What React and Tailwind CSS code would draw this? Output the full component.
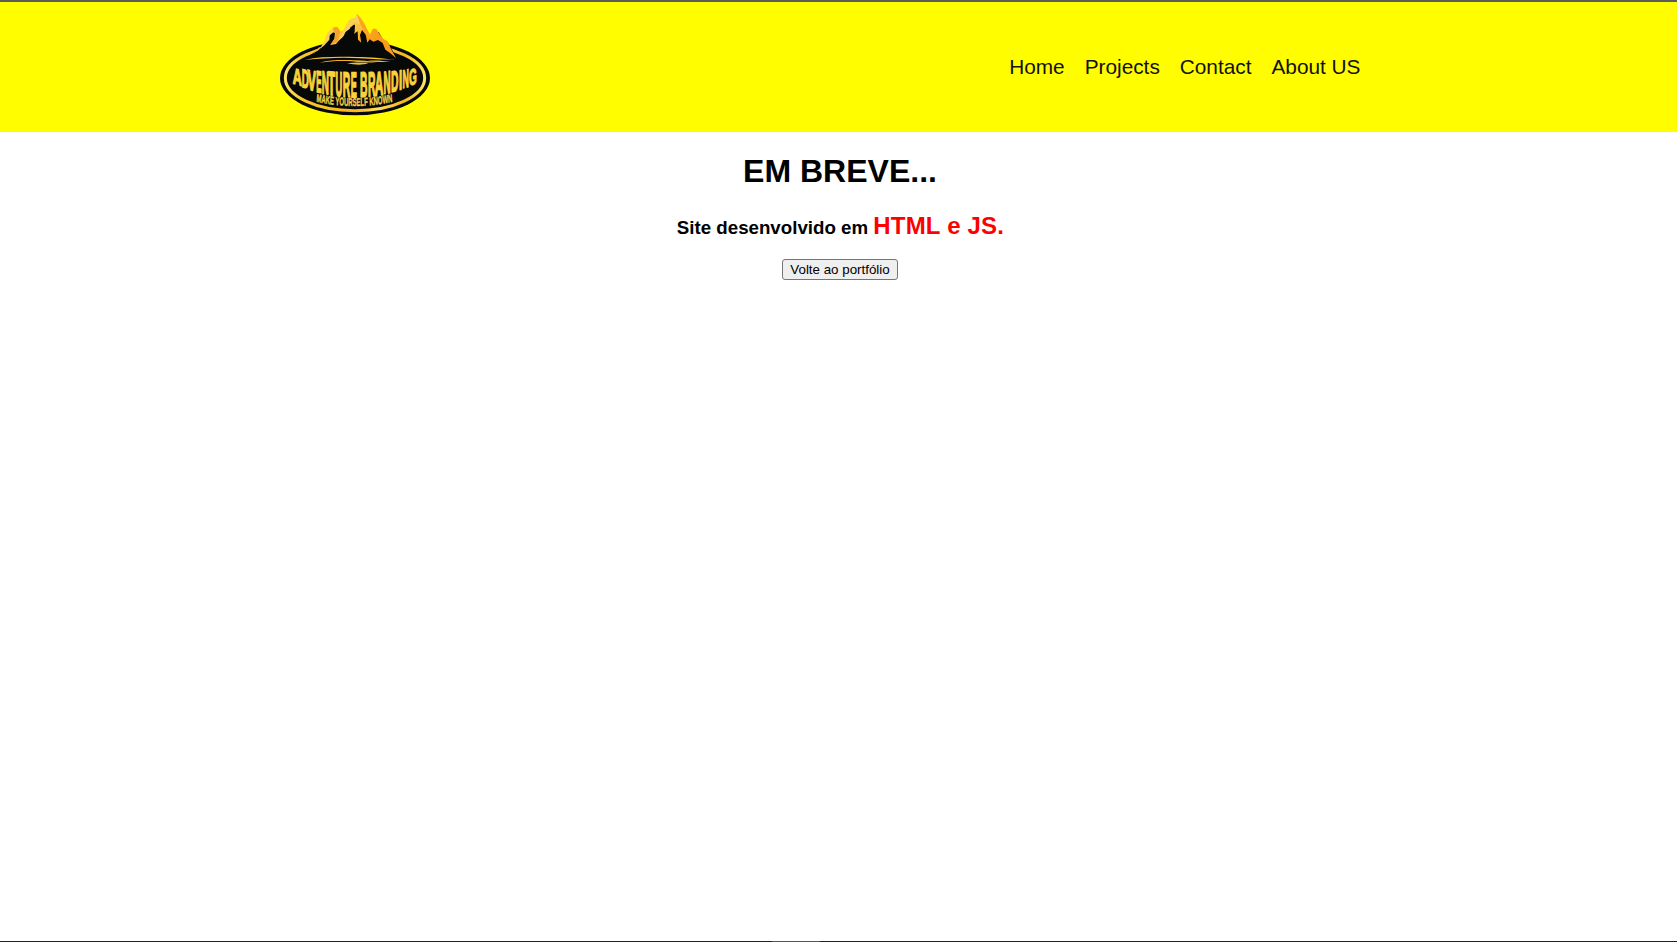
// [character, left, right, advance width in em]
const TITLE = [
  ['A', 69, 95, 0.722], ['D', 96, 116, 0.722], ['V', 113, 137, 0.667], ['E', 139, 154, 0.667],
  ['N', 156, 176, 0.722], ['T', 175, 195, 0.611], ['U', 197, 216, 0.722], ['R', 219, 240, 0.722],
  ['E', 243, 260, 0.667], ['B', 271, 292, 0.722], ['R', 295, 316, 0.722], ['A', 315, 339, 0.722],
  ['N', 341, 361, 0.722], ['D', 364, 385, 0.722], ['I', 387, 396, 0.278], ['N', 398, 416, 0.722],
  ['G', 418, 440, 0.778],
];

const topAt = (x) => 218 - 12 * ((x - 255) / 185) ** 2;
const bottomAt = (x) => 291 - 42 * ((x - 255) / 185) ** 2;

function TitleLetter({ item }) {
  const [char, left, right, advance] = item;
  const middle = (left + right) / 2;
  const scaleY = (bottomAt(middle) - topAt(middle)) / 69;
  const scaleX = (right - left) / (advance * 94);
  const slope = (-2 * 28 * (middle - 255)) / 185 ** 2;
  const matrix = `matrix(${scaleX} ${slope * scaleX} 0 ${scaleY} ${middle} ${bottomAt(middle)})`;
  return (
    <text transform={matrix} textAnchor="middle" fontSize="100">
      {char}
    </text>
  );
}

function Logo() {
  return (
    <svg className="block h-[140px] w-[170px]" viewBox="0 0 510 420" role="img" aria-label="Adventure Branding">
      <defs>
        <linearGradient id="ring" x1="0" x2="1" y1="0" y2="0">
          <stop offset="0" stopColor="#fbe36a" />
          <stop offset=".12" stopColor="#f8c82b" />
          <stop offset=".5" stopColor="#fbb51c" />
          <stop offset=".65" stopColor="#fbdf5c" />
          <stop offset=".85" stopColor="#f4b51e" />
          <stop offset="1" stopColor="#fbe464" />
        </linearGradient>
        <linearGradient id="peak" x1="0" x2="1" y1="0" y2=".7">
          <stop offset="0" stopColor="#f9cf50" />
          <stop offset=".5" stopColor="#fbc33c" />
          <stop offset=".65" stopColor="#fba01d" />
          <stop offset="1" stopColor="#f9981c" />
        </linearGradient>
        <path id="taglineArc" d="M224 305Q411 331 597 305" />
      </defs>
      <ellipse cx="255" cy="234" rx="225" ry="112" fill="#070808" />
      <ellipse cx="255" cy="234" rx="209" ry="98" fill="none" stroke="url(#ring)" strokeWidth="9" />
      <path d="M104 180 122 164 150 144 166 124 178 98 192 88 212 97 223 94 238 68 258 60 270 62 288 92 300 108 312 94 326 96 340 120 354 128 384 180Z" fill="#070808" />
      <path d="M150 145 164 123 172 100 190 82 202 81 211 94 221 91 235 64 244 56 257 53 260 41 272 55 282 69 290 86 300 104 309 86 319 87 329 103 340 117 353 124 362 145 378 174 359 158 346 149 338 129 324 120 310 125 299 118 292 128 287 104 276 90 270 105 274 128 264 119 263 94 252 101 246 90 242 77 229 90 221 108 209 119 198 132 181 135 193 116 195 99 185 95 177 108 177 118 160 136Z" fill="url(#peak)" />
      <path d="m192 82 10-1 9 13-8 31-22 10 13-19 3-18-11-9Z" fill="#f8a12a" />
      <path d="M190 84 172 101 164 124 150 146 163 136 178 119 179 106 190 97Z" fill="#fad057" />
      <path d="m257 53 3-12 12 14 10 14 7 20-13-6-9-12-14-4-12 8-16 12-3 7 15-30 9-8Z" fill="#f9d255" />
      <path d="M221 91 235 64 246 72 240 86 226 96 216 113 206 121Z" fill="#f9d255" />
      <path d="M260 41 272 55 282 69 290 86 300 104 309 86 319 87 308 108 296 114 282 92 272 76Z" fill="#fba21e" />
      <path d="m262 73 10 5-3 9-7 3Z" fill="#f8c040" />
      <path d="m244 80 6-5 5-1-1 22-4 8-6-10-8 12-4 18-6-4 10-28Z" fill="#070808" />
      <path d="m134 154 14-12 7-1-10 10-19 11Z" fill="#f9b925" />
      <path d="M104 180c46-11 100-10 157-9 43 0 70 4 118 9-42 0-75-3-112-5-55-4-103 0-163 5Z" fill="#fbc52d" />
      <path d="M149 188c33-10 79-8 111-7 26 1 49 6 73 1-26 9-48 5-76 3-41-3-69-2-108 3Z" fill="#f8b320" />
      <path d="M231 190c22-3 44-3 64 0-22 7-43 4-64 0ZM294 182c24-2 46 0 68 4-25 1-43 0-68-4Z" fill="#e3c431" />
      <g fontFamily="Liberation Sans, Arial, sans-serif" fontWeight="700" fill="#f9d23c" stroke="#f9d23c" strokeWidth="5.5">
        {TITLE.map((item) => (
          <TitleLetter key={item[1]} item={item} />
        ))}
      </g>
      <text fontFamily="Liberation Sans, Arial, sans-serif" fontWeight="700" fontSize="34" fill="#f8d046" transform="matrix(.62 0 0 1 0 0)" stroke="#f8d046" strokeWidth="1.2">
        <textPath href="#taglineArc" textLength="370" lengthAdjust="spacingAndGlyphs">MAKE YOURSELF KNOWN</textPath>
      </text>
    </svg>
  );
}

const LINKS = ['Home', 'Projects', 'Contact', 'About US'];

export default function App() {
  return (
    <div className="flex h-[942px] w-full flex-col overflow-hidden bg-white font-['Liberation_Sans',Arial,sans-serif] text-black">
      <header className="flex h-[132px] shrink-0 items-start justify-between border-t-2 border-[#5b5b5b] bg-[#fffd00] pl-[270px] pr-[316.5px]">
        <div className="-mt-0.5">
          <Logo />
        </div>
        <nav className="mt-[53px]">
          <ul className="flex gap-5 text-[20.8px] leading-6 text-[#111]">
            {LINKS.map((label) => (
              <li key={label}>
                <a href="#">{label}</a>
              </li>
            ))}
          </ul>
        </nav>
      </header>
      <main className="flex flex-1 flex-col items-center pl-[3px] pt-[21px]">
        <h1 className="text-[32px] font-bold leading-[37px]">EM BREVE...</h1>
        <h3 className="mt-[22px] pl-px text-[18.72px] font-bold leading-[27px]">
          Site desenvolvido em <span className="text-[24px] tracking-[0.2px] text-[#ff0000]">HTML e JS.</span>
        </h3>
        <button className="mt-[18px] h-[21px] w-[116px] whitespace-nowrap rounded-[3px] border border-[#767676] bg-[#efefef] text-[13.333px] leading-[15px]">
          Volte ao portfólio
        </button>
      </main>
      <footer className="flex h-px shrink-0 bg-[#222]">
        <div className="ml-[772px] h-px w-12 bg-[#555]" />
      </footer>
    </div>
  );
}
